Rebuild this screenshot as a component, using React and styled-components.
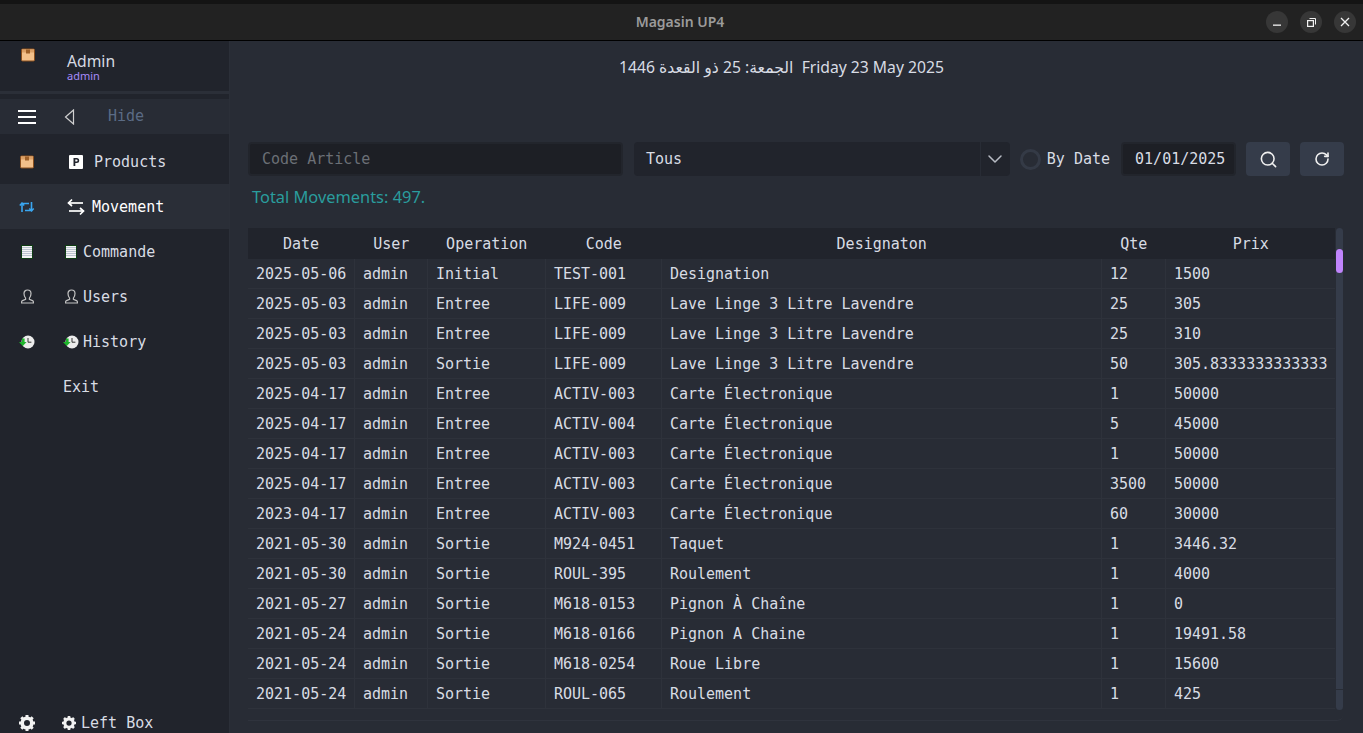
import React from "react";
import styled, { createGlobalStyle } from "styled-components";
import { Search, RotateCw, ChevronDown } from "lucide-react";

const mono = `"DejaVu Sans Mono", "Liberation Mono", monospace`;
const sans = `"Noto Sans", "DejaVu Sans", sans-serif`;

const rows = [
    ["2025-05-06", "admin", "Initial", "TEST-001", "Designation", "12", "1500"],
    ["2025-05-03", "admin", "Entree", "LIFE-009", "Lave Linge 3 Litre Lavendre", "25", "305"],
    ["2025-05-03", "admin", "Entree", "LIFE-009", "Lave Linge 3 Litre Lavendre", "25", "310"],
    ["2025-05-03", "admin", "Sortie", "LIFE-009", "Lave Linge 3 Litre Lavendre", "50", "305.8333333333333"],
    ["2025-04-17", "admin", "Entree", "ACTIV-003", "Carte Électronique", "1", "50000"],
    ["2025-04-17", "admin", "Entree", "ACTIV-004", "Carte Électronique", "5", "45000"],
    ["2025-04-17", "admin", "Entree", "ACTIV-003", "Carte Électronique", "1", "50000"],
    ["2025-04-17", "admin", "Entree", "ACTIV-003", "Carte Électronique", "3500", "50000"],
    ["2023-04-17", "admin", "Entree", "ACTIV-003", "Carte Électronique", "60", "30000"],
    ["2021-05-30", "admin", "Sortie", "M924-0451", "Taquet", "1", "3446.32"],
    ["2021-05-30", "admin", "Sortie", "ROUL-395", "Roulement", "1", "4000"],
    ["2021-05-27", "admin", "Sortie", "M618-0153", "Pignon À Chaîne", "1", "0"],
    ["2021-05-24", "admin", "Sortie", "M618-0166", "Pignon A Chaine", "1", "19491.58"],
    ["2021-05-24", "admin", "Sortie", "M618-0254", "Roue Libre", "1", "15600"],
    ["2021-05-24", "admin", "Sortie", "ROUL-065", "Roulement", "1", "425"],
];

const columns = [
    ["Date", 106],
    ["User", 73],
    ["Operation", 118],
    ["Code", 116],
    ["Designaton", 440],
    ["Qte", 64],
    ["Prix", 170],
];

const PackageIcon = () => (
    <svg width="14" height="14" viewBox="0 0 14 14">
        <rect x="0.5" y="1" width="13" height="12" rx="1" fill="#f3c08a" stroke="#8a4f1d" />
        <rect x="1" y="1.500" width="12" height="3" fill="#dca066" />
        <rect x="5" y="1.500" width="4" height="4" fill="#9e6028" />
    </svg>
);

const ProductIcon = () => (
    <svg width="14" height="14" viewBox="0 0 14 14">
        <rect width="14" height="14" rx="1" fill="#ffffff" />
        <path d="M4.500 11V3h3.200a2.500 2.500 0 0 1 0 5H6.300v3z M6.300 4.500v2h1.300a1 1 0 0 0 0-2z" fill="#23262e" fillRule="evenodd" />
    </svg>
);

const RetweetIcon = () => (
    <svg width="16" height="12" viewBox="0 0 16 12" fill="none" stroke="#3aa6f0" strokeWidth="1.600">
        <path d="M3 11V2.500h7" />
        <path d="M0.800 4.500 3 2.200l2.200 2.300" />
        <path d="M12.500 1v8.500H6" />
        <path d="M10.300 7.500l2.200 2.300 2.200-2.300" />
    </svg>
);

const ArrowsIcon = () => (
    <svg width="18" height="18" viewBox="0 0 18 18" fill="none" stroke="#ffffff" strokeWidth="1.700">
        <path d="M1.500 5h14.500" />
        <path d="M5 1.500 1.500 5 5 8" />
        <path d="M2 13h14.500" />
        <path d="M13 10l3.500 3L13 16.500" />
    </svg>
);

const NotebookIcon = () => (
    <svg width="12" height="14" viewBox="0 0 12 14">
        <rect width="12" height="14" fill="#0f3d14" />
        <rect x="1" y="1" width="10" height="12" fill="#f4f4f4" />
        <path d="M1 2.500h10M1 4.500h10M1 6.500h10M1 8.500h10M1 10.500h10" stroke="#bcc4d0" strokeWidth="1" />
    </svg>
);

const UserIcon = () => (
    <svg width="13" height="15" viewBox="0 0 13 15" fill="none" stroke="#c2c2c2" strokeWidth="1.200">
        <path d="M4.600 9.200C3.400 7.800 3 6.200 3 4.600 3 2.400 4.500 1 6.500 1S10 2.400 10 4.600c0 1.600-.4 3.200-1.600 4.600v1.200l3.100 1.200c.5.2.9.6.9 1.200V14H.6v-1.200c0-.6.4-1 .9-1.200l3.100-1.200z" />
    </svg>
);

const HistoryIcon = () => (
    <svg width="16" height="14" viewBox="0 0 16 14">
        <circle cx="9" cy="7" r="6.500" fill="#ececec" />
        <path d="M9 3v4.200h3.400" fill="none" stroke="#333" strokeWidth="1" />
        <path d="M0 7h3V3.500l2.600 0V7h2l-3.800 4z" fill="#1fb52c" />
    </svg>
);

const GearIcon = ({ size }) => (
    <svg width={size} height={size} viewBox="0 0 16 16">
        <circle cx="8" cy="8" r="4.800" fill="none" stroke="#f2f2f2" strokeWidth="3.600" />
        <path
            d="M8 0v3M8 13v3M0 8h3M13 8h3M2.300 2.300l2.200 2.200M11.500 11.500l2.200 2.200M13.700 2.300l-2.200 2.200M4.500 11.500l-2.200 2.200"
            stroke="#f2f2f2"
            strokeWidth="3"
        />
    </svg>
);

const RestoreIcon = () => (
    <svg width="9" height="9" viewBox="0 0 9 9" fill="none" stroke="#f2f2f2">
        <rect x="0.600" y="2.600" width="5.800" height="5.800" strokeWidth="1.200" />
        <path d="M2.500 .5h6v6" strokeWidth="1" />
    </svg>
);

const MinIcon = () => (
    <svg width="10" height="10" viewBox="0 0 10 10">
        <rect x="1" y="7.500" width="8" height="1.300" fill="#f2f2f2" />
    </svg>
);

const CloseIcon = () => (
    <svg width="10" height="10" viewBox="0 0 10 10" stroke="#f2f2f2" strokeWidth="1.300">
        <path d="M1 1l8 8M9 1l-8 8" />
    </svg>
);

const menu = [
    { side: <PackageIcon />, inner: <ProductIcon />, label: "Products", offset: 69, gap: 11 },
    { side: <RetweetIcon />, inner: <ArrowsIcon />, label: "Movement", offset: 67, gap: 7, active: true },
    { side: <NotebookIcon />, inner: <NotebookIcon />, label: "Commande", offset: 65, gap: 6 },
    { side: <UserIcon />, inner: <UserIcon />, label: "Users", offset: 65, gap: 5 },
    { side: <HistoryIcon />, inner: <HistoryIcon />, label: "History", offset: 63, gap: 4 },
    { label: "Exit", offset: 63, gap: 0 },
];

export default function App() {
    return (
        <>
            <GlobalStyle />
            <Window>
                <TitleBar>
                    <Title>Magasin UP4</Title>
                    <WindowButtons>
                        <WindowButton><MinIcon /></WindowButton>
                        <WindowButton><RestoreIcon /></WindowButton>
                        <WindowButton><CloseIcon /></WindowButton>
                    </WindowButtons>
                </TitleBar>
                <Body>
                    <Sidebar>
                        <Profile>
                            <ProfileIcon><PackageIcon /></ProfileIcon>
                            <ProfileText>
                                <ProfileName>Admin</ProfileName>
                                <ProfileRole>admin</ProfileRole>
                            </ProfileText>
                        </Profile>
                        <HideRow>
                            <Burger>
                                <BurgerLine />
                                <BurgerLine />
                                <BurgerLine />
                            </Burger>
                            <svg width="11" height="16" viewBox="0 0 11 16" fill="none" stroke="#d0d0d0" strokeWidth="1.200">
                                <path d="M9.500 1 1.500 8l8 7z" />
                            </svg>
                            <HideLabel>Hide</HideLabel>
                        </HideRow>
                        <Menu>
                            {menu.map((item) => (
                                <MenuItem key={item.label} $active={item.active}>
                                    <SideIcon>{item.side}</SideIcon>
                                    <MenuInner $offset={item.offset} $gap={item.gap}>
                                        {item.inner}
                                        <span>{item.label}</span>
                                    </MenuInner>
                                </MenuItem>
                            ))}
                        </Menu>
                        <SidebarFooter>
                            <SideIcon><GearIcon size={16} /></SideIcon>
                            <MenuInner $offset={62} $gap={5}>
                                <GearIcon size={14} />
                                <span>Left Box</span>
                            </MenuInner>
                        </SidebarFooter>
                    </Sidebar>
                    <Main>
                        <DateLine>الجمعة: 25 ذو القعدة 1446 &nbsp;Friday 23 May 2025</DateLine>
                        <Toolbar>
                            <CodeInput placeholder="Code Article" readOnly />
                            <SelectBox>
                                <SelectValue>Tous</SelectValue>
                                <SelectArrow><ChevronDown size={24} color="#b8bcc4" strokeWidth={1.500} /></SelectArrow>
                            </SelectBox>
                            <Radio />
                            <RadioLabel>By Date</RadioLabel>
                            <DateInput>01/01/2025</DateInput>
                            <IconButton><Search size={19} color="#f0f0f0" /></IconButton>
                            <IconButton><RotateCw size={16} color="#f0f0f0" strokeWidth={2.400} /></IconButton>
                        </Toolbar>
                        <Total>Total Movements: 497.</Total>
                        <TableArea>
                            <Table>
                                <colgroup>
                                    {columns.map(([name, width]) => (
                                        <col key={name} width={width} />
                                    ))}
                                </colgroup>
                                <thead>
                                    <tr>
                                        {columns.map(([name]) => (
                                            <Th key={name}>{name}</Th>
                                        ))}
                                    </tr>
                                </thead>
                                <tbody>
                                    {rows.map((row, i) => (
                                        <Row key={i}>
                                            {row.map((cell, j) => (
                                                <Td key={j}>{cell}</Td>
                                            ))}
                                        </Row>
                                    ))}
                                </tbody>
                            </Table>
                            <ScrollTrack>
                                <ScrollThumb />
                                <ScrollEnd />
                            </ScrollTrack>
                        </TableArea>
                    </Main>
                </Body>
            </Window>
        </>
    );
}

const GlobalStyle = createGlobalStyle`
    * {
        box-sizing: border-box;
    }
    html, body {
        margin: 0;
        padding: 0;
        height: 733px;
        overflow: hidden;
        background: #282c35;
    }
`;
const Window = styled.div`
    display: flex;
    flex-direction: column;
    height: 733px;
    font-family: ${mono};
    color: #d8dce4;
`;
const TitleBar = styled.header`
    position: relative;
    display: flex;
    align-items: center;
    justify-content: center;
    height: 41px;
    flex-shrink: 0;
    padding-top: 4px;
    background: #222222;
    border-top: 4px solid #141414;
    border-bottom: 1px solid #000000;
`;
const Title = styled.div`
    font-family: ${sans};
    font-size: 14px;
    font-weight: 600;
    color: #9b9b9b;
    margin: -5px 3px 0 0;
`;
const WindowButtons = styled.div`
    position: absolute;
    right: 7px;
    top: 7px;
    display: flex;
    gap: 12px;
`;
const WindowButton = styled.div`
    display: flex;
    align-items: center;
    justify-content: center;
    width: 22px;
    height: 22px;
    border-radius: 50%;
    background: #373737;
`;
const Body = styled.div`
    display: flex;
    flex: 1;
    min-height: 0;
`;
const Sidebar = styled.aside`
    display: flex;
    flex-direction: column;
    width: 230px;
    flex-shrink: 0;
    background: #21242c;
    border-right: 1px solid #2b2f38;
`;
const Profile = styled.div`
    display: flex;
    height: 53px;
    flex-shrink: 0;
    border-bottom: 3px solid #2b2f38;
`;
const ProfileIcon = styled.div`
    width: 67px;
    padding: 6px 0 0 21px;
`;
const ProfileText = styled.div`
    display: flex;
    flex-direction: column;
    padding-top: 11px;
`;
const ProfileName = styled.div`
    font-family: ${sans};
    font-size: 15.700px;
    line-height: 18px;
    color: #d6dae2;
`;
const ProfileRole = styled.div`
    font-family: ${sans};
    font-size: 11px;
    line-height: 12px;
    color: #a78bfa;
`;
const HideRow = styled.div`
    display: flex;
    align-items: center;
    height: 35px;
    margin-top: 5px;
    padding-left: 18px;
    background: #282c35;
    flex-shrink: 0;
    svg {
        margin-left: 28px;
    }
`;
const Burger = styled.div`
    display: flex;
    flex-direction: column;
    gap: 4px;
    width: 18px;
`;
const BurgerLine = styled.div`
    height: 2px;
    background: #ffffff;
`;
const HideLabel = styled.span`
    margin: -2px 0 0 33px;
    font-size: 15px;
    color: #5b6b85;
`;
const Menu = styled.nav`
    display: flex;
    flex-direction: column;
    flex: 1;
    margin-top: 5px;
`;
const MenuItem = styled.div`
    display: flex;
    align-items: center;
    height: 45px;
    background: ${(p) => (p.$active ? "#2a2e37" : "transparent")};
    color: ${(p) => (p.$active ? "#ffffff" : "#d8dce4")};
    font-size: 15px;
`;
const SideIcon = styled.div`
    display: flex;
    align-items: center;
    justify-content: center;
    width: 54px;
    flex-shrink: 0;
`;
const MenuInner = styled.div`
    display: flex;
    align-items: center;
    gap: ${(p) => p.$gap}px;
    margin-left: ${(p) => p.$offset - 54}px;
`;
const SidebarFooter = styled.div`
    display: flex;
    align-items: center;
    height: 22px;
    font-size: 15px;
    flex-shrink: 0;
    padding-top: 2px;
`;
const Main = styled.main`
    display: flex;
    flex-direction: column;
    flex: 1;
    min-width: 0;
    padding: 0 19px 0 18px;
    background: #282c35;
`;
const DateLine = styled.div`
    margin-top: 16px;
    height: 20px;
    line-height: 20px;
    padding-right: 29px;
    text-align: center;
    font-family: ${sans};
    font-size: 15.700px;
    color: #d8dce4;
    direction: ltr;
`;
const Toolbar = styled.div`
    display: flex;
    align-items: center;
    margin-top: 64px;
    height: 36px;
`;
const CodeInput = styled.input`
    width: 375px;
    height: 34px;
    padding: 0 12px;
    background: #1d1f25;
    border: 2px solid #22252c;
    border-radius: 4px;
    font-family: ${mono};
    font-size: 15px;
    color: #d8dce4;
    outline: none;
    &::placeholder {
        color: #6b6f76;
        opacity: 1;
    }
`;
const SelectBox = styled.div`
    display: flex;
    align-items: stretch;
    width: 376px;
    height: 34px;
    margin-left: 11px;
    background: #21242c;
    border-radius: 4px;
    font-size: 15px;
`;
const SelectValue = styled.span`
    flex: 1;
    align-self: center;
    padding-left: 12px;
`;
const SelectArrow = styled.div`
    display: flex;
    align-items: center;
    justify-content: center;
    width: 30px;
    border-left: 1px solid #282c35;
`;
const Radio = styled.div`
    width: 21px;
    height: 21px;
    margin-left: 10px;
    border: 3px solid #343a46;
    border-radius: 50%;
    background: #282c35;
`;
const RadioLabel = styled.span`
    margin-left: 6px;
    font-size: 15px;
`;
const DateInput = styled.div`
    display: flex;
    align-items: center;
    width: 115px;
    height: 34px;
    margin-left: 11px;
    padding-left: 12px;
    background: #1d1f25;
    border: 2px solid #22252c;
    border-radius: 4px;
    font-size: 15px;
`;
const IconButton = styled.div`
    display: flex;
    align-items: center;
    justify-content: center;
    width: 44px;
    height: 34px;
    margin-left: 10px;
    background: #353c4a;
    border-radius: 4px;
`;
const Total = styled.div`
    margin: 9px 0 0 4px;
    height: 22px;
    line-height: 22px;
    font-family: ${sans};
    font-size: 16.400px;
    color: #2a9d9d;
`;
const TableArea = styled.div`
    display: flex;
    align-items: flex-start;
    gap: 1px;
    width: 1095px;
    height: 493px;
    margin-top: 20px;
    border-bottom: 1px solid #2f333d;
    border-bottom-right-radius: 6px;
`;
const Table = styled.table`
    width: 1087px;
    flex-shrink: 0;
    table-layout: fixed;
    border-collapse: collapse;
    font-size: 15px;
`;
const Th = styled.th`
    height: 31px;
    padding: 0;
    background: #21242c;
    font-weight: 400;
    text-align: center;
    color: #d8dce4;
    & + & {
        padding-left: 1.500px;
    }
`;
const Td = styled.td`
    height: 30px;
    padding: 2px 0 0 8px;
    border-right: 1px solid #2e323b;
    border-bottom: 1px solid #2e323b;
    white-space: nowrap;
    color: #d8dce4;
    & + & {
        padding-left: 8.400px;
    }
    &:last-child {
        border-right: none;
    }
`;
const Row = styled.tr`
    &:first-child td {
        height: 29px;
    }
`;
const ScrollTrack = styled.div`
    display: flex;
    flex-direction: column;
    width: 8px;
    height: 482px;
    padding-top: 21px;
    background: #353c4a;
    border-radius: 4px;
`;
const ScrollThumb = styled.div`
    height: 24px;
    background: #c084fc;
    border-radius: 4px;
`;
const ScrollEnd = styled.div`
    margin-top: auto;
    height: 21px;
    border-top: 1px solid #282c35;
`;
